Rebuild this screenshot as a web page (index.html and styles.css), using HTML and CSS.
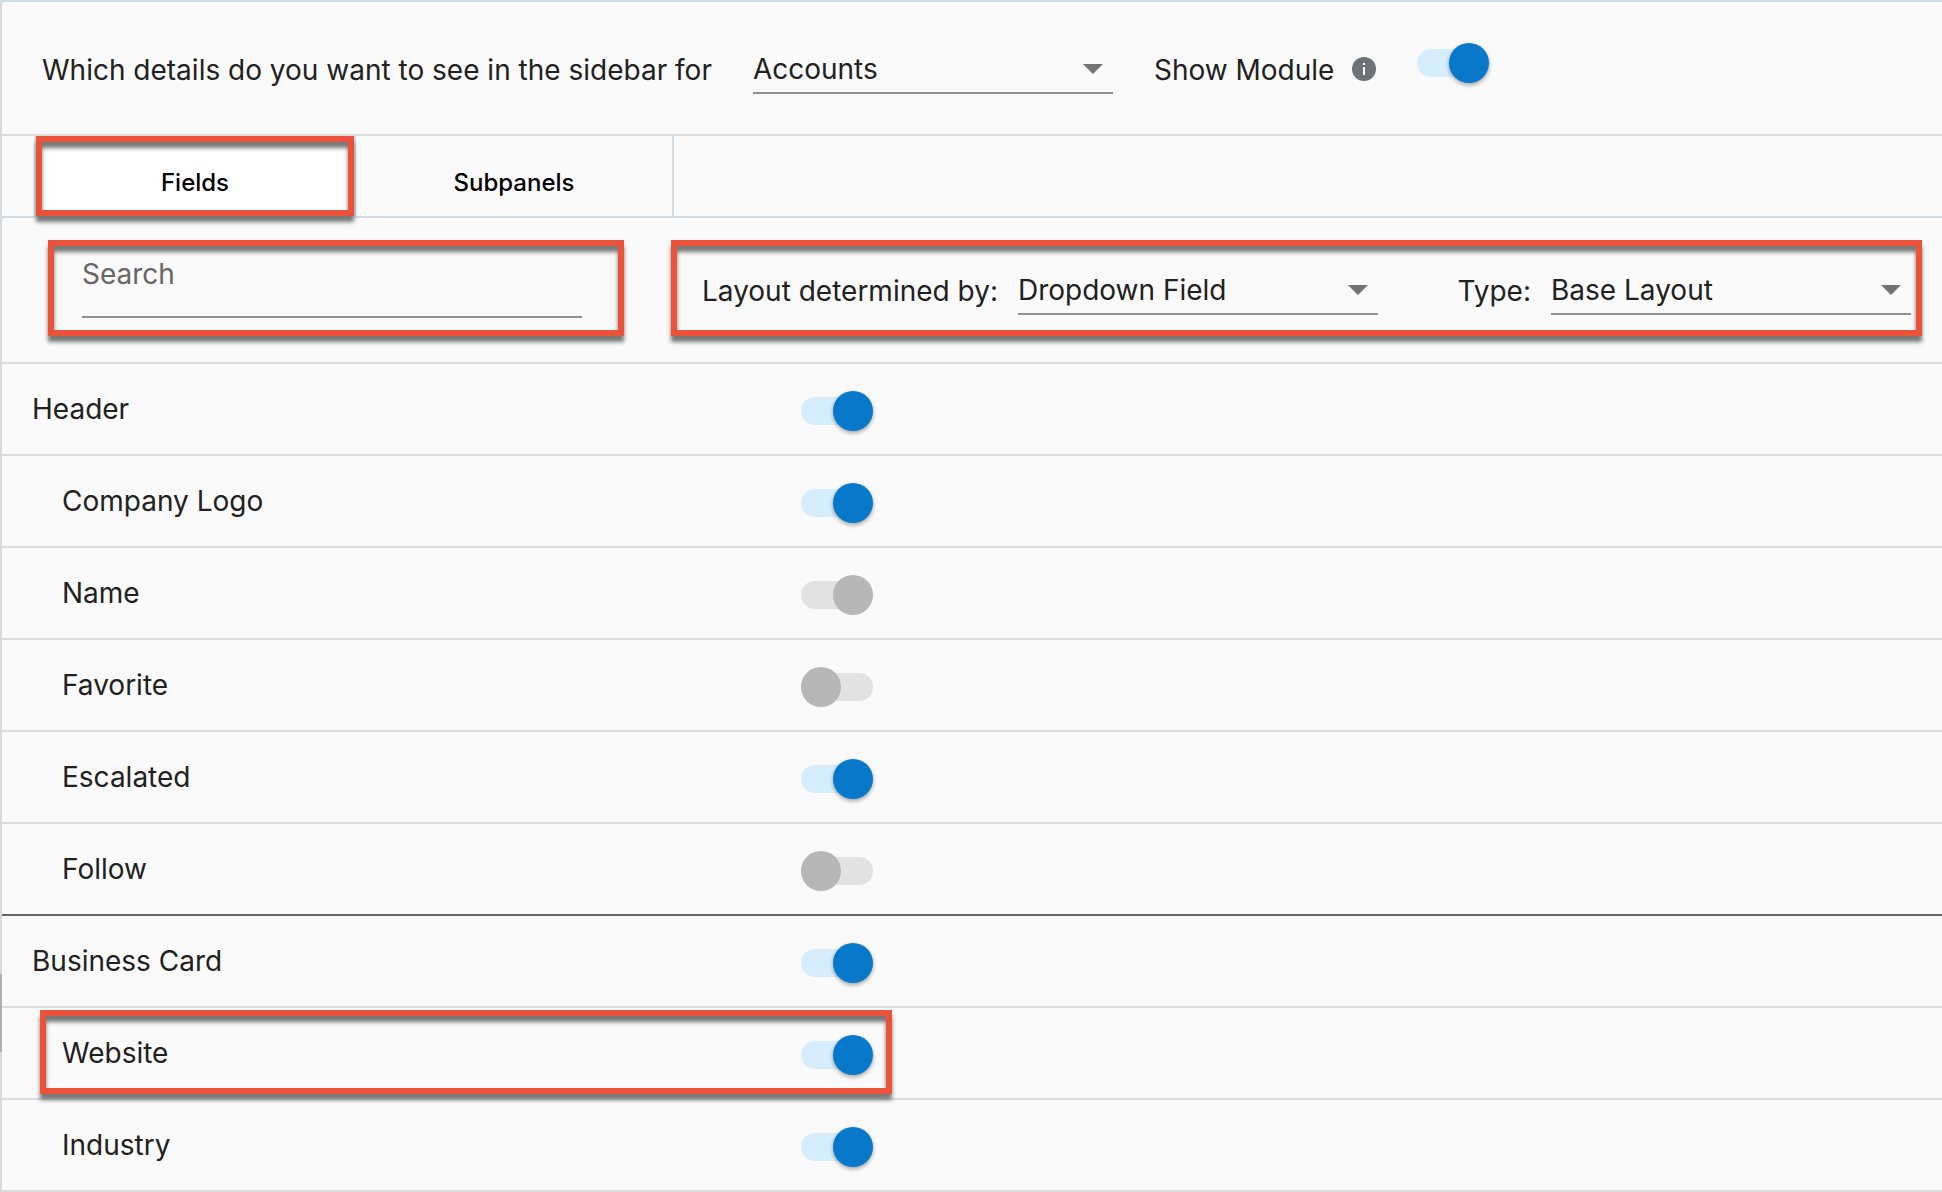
FILE: index.html
```html
<!DOCTYPE html>
<html lang="en">
<head>
<meta charset="utf-8">
<meta name="viewport" content="width=device-width, initial-scale=1">
<title>Sidebar layout</title>
<link rel="stylesheet" href="styles.css">
</head>
<body>
<main class="panel">
  <header class="module-bar">
    <label class="caption" for="module">Which details do you want to see in the sidebar for</label>
    <span class="select"><select id="module"><option>Accounts</option></select></span>
    <div class="show-module">
      <label class="caption" for="show">Show Module</label>
      <svg class="info" viewBox="0 0 24 24" aria-hidden="true"><circle cx="12" cy="12" r="12" fill="#6b7378"/><path d="M11 6h2v2h-2zM11 10h2v8h-2z" fill="#fff"/></svg>
      <input class="switch" type="checkbox" id="show" checked>
    </div>
  </header>

  <nav class="tabs">
    <button class="tab tab-active callout" type="button">Fields</button>
    <button class="tab" type="button">Subpanels</button>
  </nav>

  <section class="filters">
    <div class="search callout"><input class="search-input" type="text" placeholder="Search" aria-label="Search"></div>
    <div class="layout-options callout">
      <div class="option">
        <label class="caption" for="layout">Layout determined by:</label>
        <span class="select"><select id="layout"><option>Dropdown Field</option></select></span>
      </div>
      <div class="option">
        <label class="caption" for="type">Type:</label>
        <span class="select"><select id="type"><option>Base Layout</option></select></span>
      </div>
    </div>
  </section>

  <ul class="fields">
    <li class="row group"><label for="f1">Header</label><input class="switch" type="checkbox" id="f1" checked></li>
    <li class="row"><label for="f2">Company Logo</label><input class="switch" type="checkbox" id="f2" checked></li>
    <li class="row"><label for="f3">Name</label><input class="switch" type="checkbox" id="f3" checked disabled></li>
    <li class="row"><label for="f4">Favorite</label><input class="switch" type="checkbox" id="f4"></li>
    <li class="row"><label for="f5">Escalated</label><input class="switch" type="checkbox" id="f5" checked></li>
    <li class="row group-end"><label for="f6">Follow</label><input class="switch" type="checkbox" id="f6"></li>
    <li class="row group"><label for="f7">Business Card</label><input class="switch" type="checkbox" id="f7" checked></li>
    <li class="row callout callout-row"><label for="f8">Website</label><input class="switch" type="checkbox" id="f8" checked></li>
    <li class="row"><label for="f9">Industry</label><input class="switch" type="checkbox" id="f9" checked></li>
  </ul>
  <span class="edge-handle"></span>
</main>
</body>
</html>
```

FILE: styles.css
```css
*, *::before, *::after { box-sizing: border-box; }

body {
  margin: 0;
  background: #fafafa;
  color: #212121;
  font: 28px/40px Inter, "Liberation Sans", sans-serif;
}

button, input, select { font: inherit; color: inherit; }

.panel {
  position: relative;
  border: solid #d0dbe3;
  border-width: 2px 0 0 2px;
}

/* Module bar */
.module-bar {
  display: flex;
  align-items: flex-start;
  gap: 41px;
  padding: 41px 40px 0;
  height: 134px;
  border-bottom: 2px solid #dcdcdc;
}

.caption { padding-top: 7px; white-space: nowrap; }

.show-module { display: flex; align-items: flex-start; }
.info { width: 24px; height: 24px; margin: 14px 41px 0 18px; }

/* Drop-downs */
.select {
  position: relative;
  width: 360px;
  height: 51px;
  border-bottom: 2px solid #919191;
}

.select select {
  width: 100%;
  height: 51px;
  padding: 0;
  border: 0;
  background: none;
  appearance: none;
}

.select::after {
  content: "";
  position: absolute;
  top: 21px;
  right: 10px;
  width: 20px;
  height: 10px;
  background: #737373;
  clip-path: polygon(0 0, 100% 0, 50% 100%);
  pointer-events: none;
}

/* Switches */
.switch {
  position: relative;
  appearance: none;
  width: 72px;
  height: 40px;
  margin: 0;
}

.switch::before {
  content: "";
  position: absolute;
  inset: 6px 0;
  border-radius: 14px;
  background: #e2e2e2;
}

.switch::after {
  content: "";
  position: absolute;
  top: 0;
  left: 0;
  width: 40px;
  height: 40px;
  border-radius: 50%;
  background: #b7b7b7;
}

.switch:checked::after { left: 32px; }
.switch:checked:enabled::before { background: #d6edfe; }
.switch:checked:enabled::after {
  background: #0878ca;
  box-shadow: 0 2px 4px rgba(0, 0, 0, .35);
}

/* Tabs */
.tabs {
  display: flex;
  height: 82px;
  padding-left: 32px;
  border-bottom: 2px solid #d0dbe3;
}

.tab {
  width: 318px;
  padding: 14px 0 0;
  border: solid #d0dbe3;
  border-width: 0 2px 0 0;
  background: none;
  color: #000;
  font-size: 24px;
  font-weight: 500;
}

.tab-active {
  width: 322px;
  border-left-width: 2px;
  background: #fff;
}

/* Highlight frames */
.callout { position: relative; }

.callout::after {
  content: "";
  position: absolute;
  inset: 0;
  border: 6px solid #ea5239;
  box-shadow: 0 6px 4px #777, inset 0 6px 4px #777;
  pointer-events: none;
}

.callout-row::after {
  inset: 2px auto 4px 38px;
  width: calc(100% * 7 / 17 + 53px);
}

/* Filters */
.filters {
  display: flex;
  justify-content: space-between;
  gap: 40px;
  height: 146px;
  padding: 22px 20px 0 46px;
  border-bottom: 2px solid #dcdcdc;
}

.search { width: 576px; height: 96px; padding: 14px 42px 0 34px; }

.search-input {
  display: block;
  width: 100%;
  height: 64px;
  padding: 0 0 22px;
  border: 0;
  border-bottom: 2px solid #919191;
  background: none;
  outline: none;
}

.search-input::placeholder { color: #666; opacity: 1; }

.layout-options {
  display: flex;
  justify-content: space-between;
  width: 1251px;
  height: 96px;
  padding: 24px 11px 0 31px;
}

.option { display: flex; gap: 20px; }

/* Field list */
.fields { margin: 0; padding: 0; list-style: none; }

.row {
  display: grid;
  grid-template-columns: 7fr 10fr;
  align-items: center;
  height: 92px;
  padding-top: 4px;
  border-bottom: 2px solid #dcdcdc;
}

.row label { padding: 0 0 4px 60px; }
.group label { padding-left: 30px; }
.group-end { border-bottom-color: #666; }

.edge-handle {
  position: absolute;
  top: 972px;
  left: -2px;
  width: 2px;
  height: 78px;
  background: #a9b1b7;
}
```
